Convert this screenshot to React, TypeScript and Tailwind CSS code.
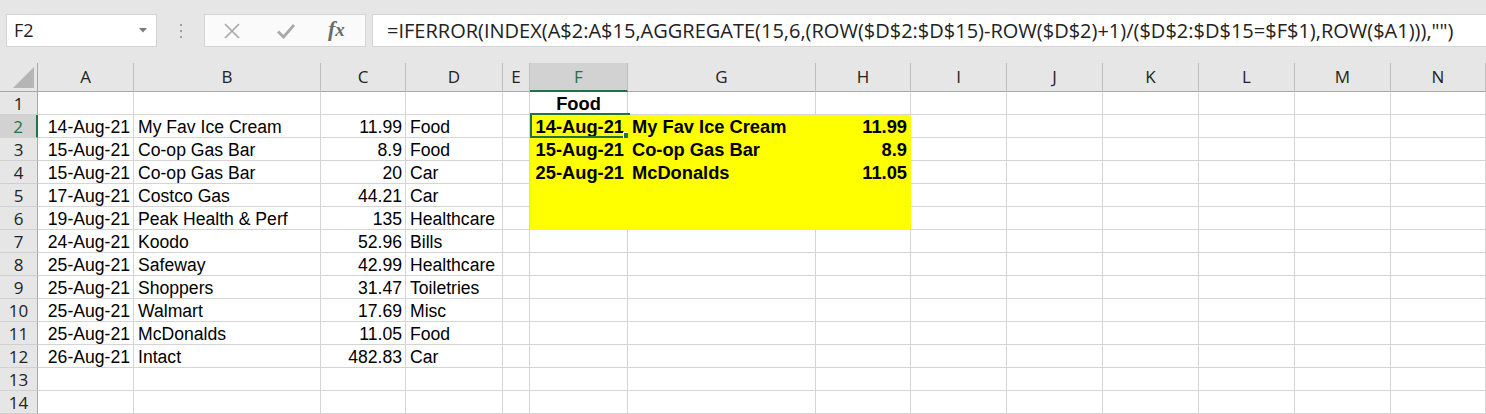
import React from 'react';

const COLS = ['A', 'B', 'C', 'D', 'E', 'F', 'G', 'H', 'I', 'J', 'K', 'L', 'M', 'N'];

type CellData = { t: string; a: 'l' | 'r' | 'c'; b?: boolean };

const rows: [string, string, string, string][] = [
  ['14-Aug-21', 'My Fav Ice Cream', '11.99', 'Food'],
  ['15-Aug-21', 'Co-op Gas Bar', '8.9', 'Food'],
  ['15-Aug-21', 'Co-op Gas Bar', '20', 'Car'],
  ['17-Aug-21', 'Costco Gas', '44.21', 'Car'],
  ['19-Aug-21', 'Peak Health & Perf', '135', 'Healthcare'],
  ['24-Aug-21', 'Koodo', '52.96', 'Bills'],
  ['25-Aug-21', 'Safeway', '42.99', 'Healthcare'],
  ['25-Aug-21', 'Shoppers', '31.47', 'Toiletries'],
  ['25-Aug-21', 'Walmart', '17.69', 'Misc'],
  ['25-Aug-21', 'McDonalds', '11.05', 'Food'],
  ['26-Aug-21', 'Intact', '482.83', 'Car'],
];

const results: [string, string, string][] = [
  ['14-Aug-21', 'My Fav Ice Cream', '11.99'],
  ['15-Aug-21', 'Co-op Gas Bar', '8.9'],
  ['25-Aug-21', 'McDonalds', '11.05'],
];

const data: Record<string, CellData> = {};
rows.forEach((r, i) => {
  const n = i + 2;
  data['A' + n] = { t: r[0], a: 'r' };
  data['B' + n] = { t: r[1], a: 'l' };
  data['C' + n] = { t: r[2], a: 'r' };
  data['D' + n] = { t: r[3], a: 'l' };
});
data['F1'] = { t: 'Food', a: 'c', b: true };
results.forEach((r, i) => {
  const n = i + 2;
  data['F' + n] = { t: r[0], a: 'r', b: true };
  data['G' + n] = { t: r[1], a: 'l', b: true };
  data['H' + n] = { t: r[2], a: 'r', b: true };
});

function isYellow(col: string, row: number) {
  return (col === 'F' || col === 'G' || col === 'H') && row >= 2 && row <= 6;
}

function TopBar() {
  return (
    <div className="h-[63px] bg-[#e6e6e6] flex items-start pt-[14px] pl-[6px]">
      <div className="w-[151px] h-[33px] bg-white border border-[#d4d4d4] flex items-center justify-between pl-[7px] pr-[9px]">
        <span className="text-[18px] text-[#222] font-['Open_Sans',sans-serif]">F2</span>
        <svg width="8" height="5" viewBox="0 0 8 5">
          <path d="M0 0 L8 0 L4 4.5 Z" fill="#7a7a7a" />
        </svg>
      </div>
      <div className="w-[47px] h-[33px] flex flex-col items-center justify-center gap-[4px] pl-[1px]">
        <div className="w-[2px] h-[2px] bg-[#a0a0a0]" />
        <div className="w-[2px] h-[2px] bg-[#a0a0a0]" />
        <div className="w-[2px] h-[2px] bg-[#a0a0a0]" />
      </div>
      <div className="w-[162px] h-[33px] bg-[#fafafa] border border-[#d4d4d4] flex items-center">
        <div className="w-[20px] ml-[17px] flex justify-center">
          <svg width="20" height="16" viewBox="0 0 20 16">
            <path d="M3 1 L17 15 M17 1 L3 15" stroke="#a9a9a9" strokeWidth="1.7" fill="none" />
          </svg>
        </div>
        <div className="w-[20px] ml-[34px] flex justify-center">
          <svg width="20" height="16" viewBox="0 0 20 16">
            <path d="M2 8.5 L7.5 14 L18 2" stroke="#a9a9a9" strokeWidth="2.8" fill="none" />
          </svg>
        </div>
        <div className="ml-[32px] text-[22px] leading-none italic font-bold text-[#6b6b6b] font-['Liberation_Serif',serif] -mt-[3px]">
          f<span className="text-[19px]">x</span>
        </div>
      </div>
      <div className="flex-1 ml-[6px] h-[33px] bg-white border border-r-0 border-[#d4d4d4] flex items-center pl-[14px]">
        <span className="text-[20px] text-[#222] whitespace-nowrap font-['Open_Sans',sans-serif]">
          =IFERROR(INDEX(A$2:A$15,AGGREGATE(15,6,(ROW($D$2:$D$15)-ROW($D$2)+1)/($D$2:$D$15=$F$1),ROW($A1))),"")
        </span>
      </div>
    </div>
  );
}

function Cell({ col, row }: { col: string; row: number }) {
  const key = col + row;
  const d = data[key];
  const yellow = isYellow(col, row);
  const base =
    'relative h-[23px] border-r border-b flex items-center whitespace-nowrap leading-[22px] text-black pt-[2px]';
  const colorCls = yellow ? 'bg-[#ffff00] border-[#ffff00]' : 'bg-white border-[#d4d4d4]';
  const alignCls = d ? (d.a === 'r' ? 'justify-end pr-[3px]' : d.a === 'c' ? 'justify-center' : 'justify-start pl-[4px]') : '';
  const boldCls = d && d.b ? 'font-bold text-[18.3px]' : 'text-[17.6px]';
  return (
    <div className={base + ' ' + colorCls + ' ' + alignCls + ' ' + boldCls}>
      {d ? <span>{d.t}</span> : null}
      {key === 'F2' ? (
        <>
          <div className="absolute left-0 -top-[2px] w-[100px] h-[25px] border-2 border-[#217346] pointer-events-none" />
          <div className="absolute left-[93px] top-[17px] w-[7px] h-[7px] bg-[#217346] border border-white" />
        </>
      ) : null}
    </div>
  );
}

function Sheet() {
  const rowNums = Array.from({ length: 14 }, (_, i) => i + 1);
  return (
    <div className="grid grid-cols-[38px_96px_187px_85px_97px_27px_98px_188px_95px_96px_96px_96px_96px_96px_95px] grid-rows-[29px_repeat(14,23px)]">
      <div className="bg-[#e6e6e6] border-r border-b border-[#a8a8a8] flex items-end justify-end pr-[3px] pb-[3px]">
        <svg width="21" height="21" viewBox="0 0 21 21">
          <path d="M21 0 L21 21 L0 21 Z" fill="#b5b5b5" />
        </svg>
      </div>
      {COLS.map((c) =>
        c === 'F' ? (
          <div
            key={c}
            className="bg-[#d2d2d2] border-r border-[#bdbdbd] border-b-2 border-b-[#217346] flex items-center justify-center text-[17px] text-[#217346] font-['Open_Sans',sans-serif]"
          >
            {c}
          </div>
        ) : (
          <div
            key={c}
            className="bg-[#e6e6e6] border-r border-r-[#bdbdbd] border-b border-b-[#a8a8a8] flex items-center justify-center text-[17px] text-[#222] font-['Open_Sans',sans-serif]"
          >
            {c}
          </div>
        )
      )}
      {rowNums.map((r) => (
        <React.Fragment key={r}>
          {r === 2 ? (
            <div className="bg-[#d2d2d2] border-b border-b-[#d4d4d4] border-r-2 border-r-[#217346] flex items-center justify-center text-[17px] text-[#217346] font-['Open_Sans',sans-serif] leading-none pt-[1px]">
              {r}
            </div>
          ) : (
            <div className="bg-[#e6e6e6] border-b border-b-[#d0d0d0] border-r border-r-[#a8a8a8] flex items-center justify-center text-[17px] text-[#222] font-['Open_Sans',sans-serif] leading-none pt-[1px]">
              {r}
            </div>
          )}
          {COLS.map((c) => (
            <Cell key={c + r} col={c} row={r} />
          ))}
        </React.Fragment>
      ))}
    </div>
  );
}

export default function App() {
  return (
    <div className="w-[1486px] h-[414px] overflow-hidden bg-white font-['Liberation_Sans',Arial,sans-serif]">
      <TopBar />
      <Sheet />
    </div>
  );
}
